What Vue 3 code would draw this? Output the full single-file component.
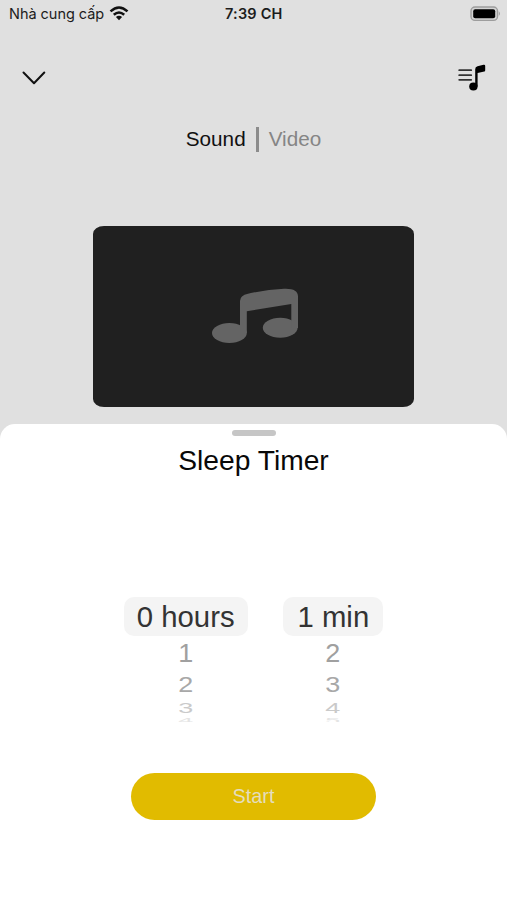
<template>
  <div class="screen">
    <header class="status-bar">
      <div class="carrier">
        <span class="carrier-name">Nhà cung cấp</span>
        <svg width="20" height="15" viewBox="0 0 20 15">
          <g fill="none" stroke="#111" stroke-width="2.5">
            <path d="M1.5 5.4Q10 -2.4 18.5 5.4" />
            <path d="M4.8 8.8Q10 4.2 15.2 8.8" />
          </g>
          <path d="M6.9 11.1Q10 8.3 13.1 11.1L10 14.2Z" fill="#111" />
        </svg>
      </div>
      <span class="clock">7:39 CH</span>
      <svg class="battery" width="31" height="16" viewBox="0 0 31 16">
        <rect x="1" y="1" width="26.5" height="13.4" rx="4" fill="#d4d4d4" stroke="#9d9d9d" stroke-width="1.4" />
        <rect x="3.2" y="3.2" width="22" height="9" rx="2" fill="#000" />
        <path d="M28.8 5.3Q31 7.7 28.8 10.1Z" fill="#999" />
      </svg>
    </header>

    <nav class="toolbar">
      <svg width="24" height="14" viewBox="0 0 24 14">
        <path d="M1.5 1.5L12 12.2L22.3 1.5" fill="none" stroke="#111" stroke-width="2" stroke-linecap="round" stroke-linejoin="round" />
      </svg>
      <svg width="28" height="28" viewBox="0 0 28 28">
        <path d="M1.2 6.2H13.2M1.2 11.2H13.2M1.2 15.8H13.2" fill="none" stroke="#333" stroke-width="1.8" stroke-linecap="round" />
        <ellipse cx="15.4" cy="22.5" rx="4.2" ry="3.9" fill="#000" />
        <path d="M17.2 22.5V5.2Q17.2 2.7 19.5 2.2L25.5 .7Q27.2 .4 27.2 1.8V6.3Q27.2 7.4 26.3 7.6L19.6 9V22.5Z" fill="#000" />
      </svg>
    </nav>

    <div class="tabs">
      <span class="tab active">Sound</span>
      <span class="divider"></span>
      <span class="tab">Video</span>
    </div>

    <div class="artwork">
      <svg width="86" height="56" viewBox="0 0 86 56">
        <g fill="#646464">
          <ellipse cx="17.4" cy="45" rx="17.4" ry="10" />
          <ellipse cx="68.2" cy="39.8" rx="17.4" ry="10" />
          <path d="M28 45V13Q28 7.5 36 5.8Q54 1.5 72 .7Q86 .1 86 8.5V40H79.3V16L34.8 23.2V45Z" />
        </g>
      </svg>
    </div>

    <section class="sheet">
      <div class="handle"></div>
      <h1 class="title">Sleep Timer</h1>

      <div class="pickers">
        <div v-for="wheel in wheels" :key="wheel.unit" class="wheel">
          <div class="selected">{{ wheel.value }} {{ wheel.unit }}</div>
          <div
            v-for="(n, i) in wheel.next"
            :key="n"
            class="option"
            :style="{ height: rows[i].height + 'px', color: rows[i].color }"
          >
            <span :style="{ transform: `scaleY(${rows[i].scale})` }">{{ n }}</span>
          </div>
        </div>
      </div>

      <button class="start">Start</button>
    </section>
  </div>
</template>

<script setup>
const wheels = [
  { value: 0, unit: "hours", next: [1, 2, 3, 4] },
  { value: 1, unit: "min", next: [2, 3, 4, 5] },
];

// rows get flatter and lighter as they turn away
const rows = [
  { height: 34, scale: 0.97, color: "#a0a0a0" },
  { height: 29, scale: 0.8, color: "#a8a8a8" },
  { height: 18, scale: 0.54, color: "#cacaca" },
  { height: 7, scale: 0.26, color: "#e4e4e4" },
];
</script>

<style>
body {
  margin: 0;
}
</style>

<style scoped>
.screen {
  width: 507px;
  height: 900px;
  display: flex;
  flex-direction: column;
  overflow: hidden;
  background: #e0e0e0;
  font-family: "Liberation Sans", Arial, sans-serif;
}

.status-bar {
  height: 28px;
  box-sizing: border-box;
  padding: 0 6px 1px 9px;
  display: grid;
  grid-template-columns: 1fr 60px 1fr;
  align-items: center;
  font-family: Inter, sans-serif;
  font-size: 14.5px;
  color: #1c1c1c;
}

.carrier {
  display: flex;
  align-items: center;
  gap: 5px;
}

.carrier-name {
  letter-spacing: -0.03px;
  white-space: nowrap;
}

.carrier svg {
  margin-bottom: 1px;
}

.clock {
  font-weight: 600;
  letter-spacing: 0.2px;
}

.battery {
  justify-self: end;
}

.toolbar {
  height: 28px;
  margin-top: 36px;
  padding: 0 21px 0 22px;
  display: flex;
  justify-content: space-between;
  align-items: center;
}

.tabs {
  height: 26px;
  margin-top: 34px;
  display: flex;
  justify-content: center;
  align-items: center;
  gap: 10px;
  font-size: 20.7px;
  line-height: 26px;
}

.tab {
  color: #858585;
}

.tab.active {
  color: #111;
}

.divider {
  width: 3px;
  height: 25px;
  background: #8c8c8c;
}

.artwork {
  width: 321.5px;
  height: 181px;
  margin: 73.5px auto 0 92.8px;
  border-radius: 11px / 8px;
  background: #202020;
  display: flex;
  justify-content: center;
  align-items: center;
}

.artwork svg {
  margin-left: 3px;
}

.sheet {
  flex: 1;
  margin-top: 17.5px;
  border-radius: 15px 15px 0 0;
  background: #fff;
  display: flex;
  flex-direction: column;
  align-items: center;
}

.handle {
  width: 44px;
  height: 6px;
  margin-top: 6px;
  border-radius: 3px;
  background: #c6c6c6;
}

.title {
  margin: 7px 0 0;
  font-size: 28.2px;
  line-height: 34px;
  font-weight: 400;
  color: #080808;
}

.pickers {
  height: 125px;
  margin-top: 120px;
  display: flex;
  align-items: flex-start;
  gap: 35px;
  overflow: hidden;
}

.wheel {
  display: flex;
  flex-direction: column;
}

.selected {
  height: 39px;
  padding: 0 13px;
  border-radius: 10px;
  background: #f4f4f4;
  color: #333;
  font-size: 29.3px;
  line-height: 40px;
}

.wheel:last-child .selected {
  padding: 0 14px 0 15px;
}

.option {
  display: flex;
  justify-content: center;
  align-items: center;
  font-size: 27px;
  line-height: 32px;
}

.option:last-child {
  overflow: hidden;
}

.start {
  width: 245px;
  height: 47px;
  margin-top: 50.5px;
  padding: 0;
  border: 0;
  border-radius: 24px;
  background: #e1bb00;
  color: #e4ddbd;
  font-family: inherit;
  font-size: 19.8px;
}
</style>
